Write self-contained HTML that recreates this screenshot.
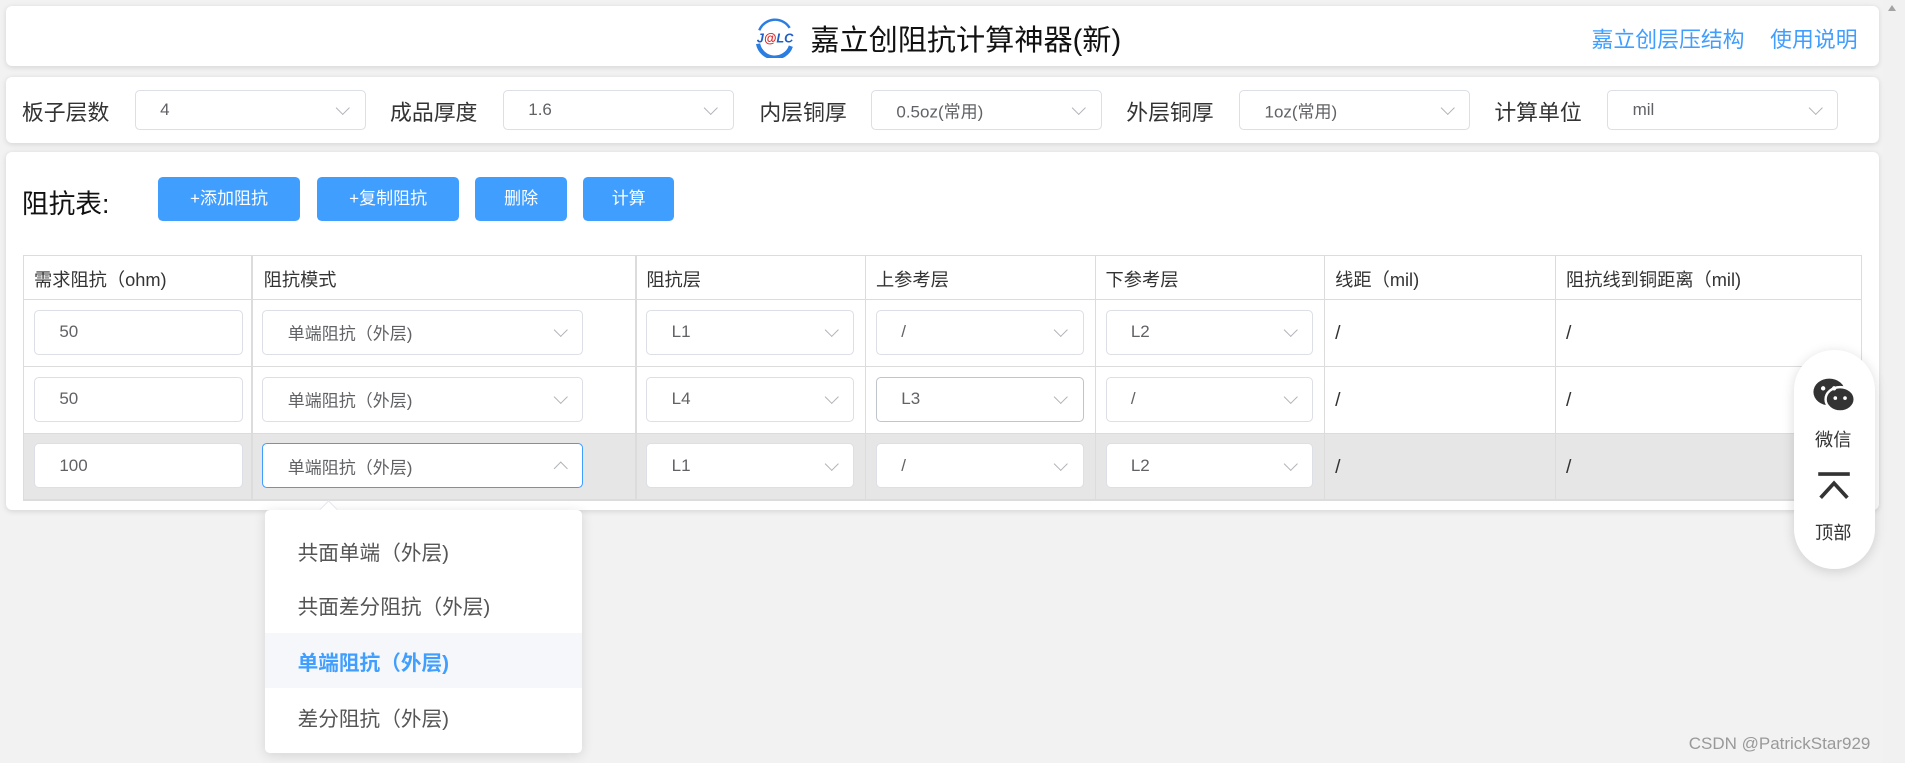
<!DOCTYPE html>
<html><head><meta charset="utf-8">
<style>
html{zoom:1.2149}
body{margin:0;width:1568px;height:628px;background:#f2f2f2;font-family:"Liberation Sans","Noto Sans CJK SC",sans-serif;color:#303133;position:relative;overflow:hidden}
.card{position:absolute;left:5px;width:1542px;background:#fff;border-radius:5px;box-shadow:0 1px 5px rgba(0,0,0,.12)}
.abs{position:absolute}
.sel{position:absolute;background:#fff;border:1px solid #dcdfe6;border-radius:4px;box-sizing:border-box;font-size:14px;color:#606266}
.sel span{position:absolute;left:20px;top:50%;transform:translateY(-50%)}
.sel i{position:absolute;right:14px;top:50%;width:7px;height:7px;border-right:1px solid #b0b3b8;border-bottom:1px solid #b0b3b8;transform:translateY(-75%) rotate(45deg)}
.sel i.up{transform:translateY(-20%) rotate(-135deg)}
.lbl{position:absolute;font-size:18px;color:#333}
.btn{position:absolute;top:146px;height:36px;background:#409eff;color:#fff;border-radius:4px;font-size:14px;line-height:36px;text-align:center}
.vl{position:absolute;top:210px;height:201px;width:1px;background:#dcdcdc}
.hl{position:absolute;left:19px;width:1514px;height:1px;background:#dcdcdc}
.th{position:absolute;top:219px;font-size:15px;color:#333}
.sl{position:absolute;font-size:16px;color:#333}
.dd{position:absolute;font-size:17px;color:#555;left:245px}
</style></head><body>
<div class="card" style="top:5px;height:49px"></div>
<svg class="abs" style="left:619px;top:14px" width="38" height="34" viewBox="0 0 38 34"><path d="M6 11 A14 14 0 0 1 31 9" fill="none" stroke="#2a7de1" stroke-width="2"/><path d="M5 22 A14 14 0 0 0 32 24" fill="none" stroke="#2a7de1" stroke-width="3.5"/><text x="19" y="21" font-size="10.5" font-weight="bold" font-style="italic" text-anchor="middle" font-family="Liberation Sans"><tspan fill="#1e5fc8">J</tspan><tspan fill="#e02020">@</tspan><tspan fill="#1e5fc8">LC</tspan></text></svg>
<div class="abs" style="left:667px;top:14px;font-size:24px;color:#111">嘉立创阻抗计算神器(新)</div>
<div class="abs" style="left:1310px;top:19px;font-size:18px;color:#409eff">嘉立创层压结构</div>
<div class="abs" style="left:1457px;top:19px;font-size:18px;color:#409eff">使用说明</div>
<div class="abs" style="left:1550px;top:0;width:18px;height:628px;background:#f1f1f1"></div>
<div class="abs" style="left:1554px;top:4px;width:0;height:0;border-left:4px solid transparent;border-right:4px solid transparent;border-bottom:5px solid #a3a3a3"></div>

<div class="card" style="top:63px;height:55px"></div>
<div class="lbl" style="left:18px;top:79px">板子层数</div>
<div class="sel" style="left:111px;top:74px;width:190px;height:33px"><span>4</span><i></i></div>
<div class="lbl" style="left:321px;top:79px">成品厚度</div>
<div class="sel" style="left:414px;top:74px;width:190px;height:33px"><span>1.6</span><i></i></div>
<div class="lbl" style="left:625px;top:79px">内层铜厚</div>
<div class="sel" style="left:717px;top:74px;width:190px;height:33px"><span>0.5oz(常用)</span><i></i></div>
<div class="lbl" style="left:927px;top:79px">外层铜厚</div>
<div class="sel" style="left:1020px;top:74px;width:190px;height:33px"><span>1oz(常用)</span><i></i></div>
<div class="lbl" style="left:1230px;top:79px">计算单位</div>
<div class="sel" style="left:1323px;top:74px;width:190px;height:33px"><span>mil</span><i></i></div>

<div class="card" style="top:125px;height:295px"></div>
<div class="abs" style="left:18px;top:150px;font-size:22px;color:#111">阻抗表:</div>
<div class="btn" style="left:130px;width:117px">+添加阻抗</div>
<div class="btn" style="left:261px;width:117px">+复制阻抗</div>
<div class="btn" style="left:391px;width:76px">删除</div>
<div class="btn" style="left:480px;width:75px">计算</div>

<div class="abs" style="left:19px;top:356px;width:1514px;height:55px;background:#e6e6e6"></div>
<div class="hl" style="top:210px"></div><div class="hl" style="top:246px"></div><div class="hl" style="top:301px"></div><div class="hl" style="top:356px"></div><div class="hl" style="top:411px"></div>
<div class="vl" style="left:19px"></div><div class="vl" style="left:207px"></div><div class="vl" style="left:523px"></div><div class="vl" style="left:712px"></div><div class="vl" style="left:901px"></div><div class="vl" style="left:1090px"></div><div class="vl" style="left:1280px"></div><div class="vl" style="left:1532px"></div>
<div class="th" style="left:28px">需求阻抗（ohm)</div>
<div class="th" style="left:217px">阻抗模式</div>
<div class="th" style="left:532px">阻抗层</div>
<div class="th" style="left:721px">上参考层</div>
<div class="th" style="left:910px">下参考层</div>
<div class="th" style="left:1099px">线距（mil)</div>
<div class="th" style="left:1289px">阻抗线到铜距离（mil)</div>

<div class="sel" style="left:28px;top:255px;width:172px;height:37px"><span>50</span></div>
<div class="sel" style="left:216px;top:255px;width:264px;height:37px"><span>单端阻抗（外层)</span><i></i></div>
<div class="sel" style="left:532px;top:255px;width:171px;height:37px"><span>L1</span><i></i></div>
<div class="sel" style="left:721px;top:255px;width:171px;height:37px"><span>/</span><i></i></div>
<div class="sel" style="left:910px;top:255px;width:171px;height:37px"><span>L2</span><i></i></div>
<div class="sl" style="left:1099px;top:265px">/</div><div class="sl" style="left:1289px;top:265px">/</div>

<div class="sel" style="left:28px;top:310px;width:172px;height:37px"><span>50</span></div>
<div class="sel" style="left:216px;top:310px;width:264px;height:37px"><span>单端阻抗（外层)</span><i></i></div>
<div class="sel" style="left:532px;top:310px;width:171px;height:37px"><span>L4</span><i></i></div>
<div class="sel" style="left:721px;top:310px;width:171px;height:37px;border-color:#c0c4cc"><span>L3</span><i></i></div>
<div class="sel" style="left:910px;top:310px;width:171px;height:37px"><span>/</span><i></i></div>
<div class="sl" style="left:1099px;top:320px">/</div><div class="sl" style="left:1289px;top:320px">/</div>

<div class="sel" style="left:28px;top:365px;width:172px;height:37px"><span>100</span></div>
<div class="sel" style="left:216px;top:365px;width:264px;height:37px;border-color:#409eff"><span>单端阻抗（外层)</span><i class="up"></i></div>
<div class="sel" style="left:532px;top:365px;width:171px;height:37px"><span>L1</span><i></i></div>
<div class="sel" style="left:721px;top:365px;width:171px;height:37px"><span>/</span><i></i></div>
<div class="sel" style="left:910px;top:365px;width:171px;height:37px"><span>L2</span><i></i></div>
<div class="sl" style="left:1099px;top:375px">/</div><div class="sl" style="left:1289px;top:375px">/</div>

<div class="abs" style="left:218px;top:420px;width:261px;height:200px;background:#fff;border-radius:4px;box-shadow:0 2px 10px rgba(0,0,0,.12)"></div>
<div class="abs" style="left:265px;top:414px;width:10px;height:10px;background:#fff;transform:rotate(45deg);border-left:1px solid #e4e7ed;border-top:1px solid #e4e7ed"></div>
<div class="abs" style="left:218px;top:521px;width:261px;height:45px;background:#f5f7fa"></div>
<div class="dd" style="top:441px">共面单端（外层)</div>
<div class="dd" style="top:486px">共面差分阻抗（外层)</div>
<div class="dd" style="top:532px;color:#409eff;font-weight:bold">单端阻抗（外层)</div>
<div class="dd" style="top:578px">差分阻抗（外层)</div>

<div class="abs" style="left:1477px;top:288px;width:66px;height:180px;background:#fff;border-radius:33px;box-shadow:0 2px 10px rgba(0,0,0,.15)"></div>
<svg class="abs" style="left:1491px;top:309px" width="38" height="34" viewBox="0 0 38 34"><ellipse cx="15" cy="14" rx="13" ry="11" fill="#333"/><ellipse cx="24" cy="20" rx="12" ry="10" fill="#333" stroke="#fff" stroke-width="2"/><circle cx="10" cy="11" r="1.8" fill="#fff"/><circle cx="19" cy="11" r="1.8" fill="#fff"/><circle cx="20" cy="19" r="1.5" fill="#fff"/><circle cx="28" cy="19" r="1.5" fill="#fff"/></svg>
<div class="abs" style="left:1494px;top:351px;font-size:15px;color:#333">微信</div>
<svg class="abs" style="left:1496px;top:388px" width="28" height="26" viewBox="0 0 28 26"><rect x="1" y="1" width="26" height="3" fill="#333"/><path d="M3 22 L14 10 L25 22" fill="none" stroke="#333" stroke-width="3"/></svg>
<div class="abs" style="left:1494px;top:427px;font-size:15px;color:#333">顶部</div>
<div class="abs" style="left:1390px;top:604px;font-size:14px;color:#999">CSDN @PatrickStar929</div>
</body></html>
